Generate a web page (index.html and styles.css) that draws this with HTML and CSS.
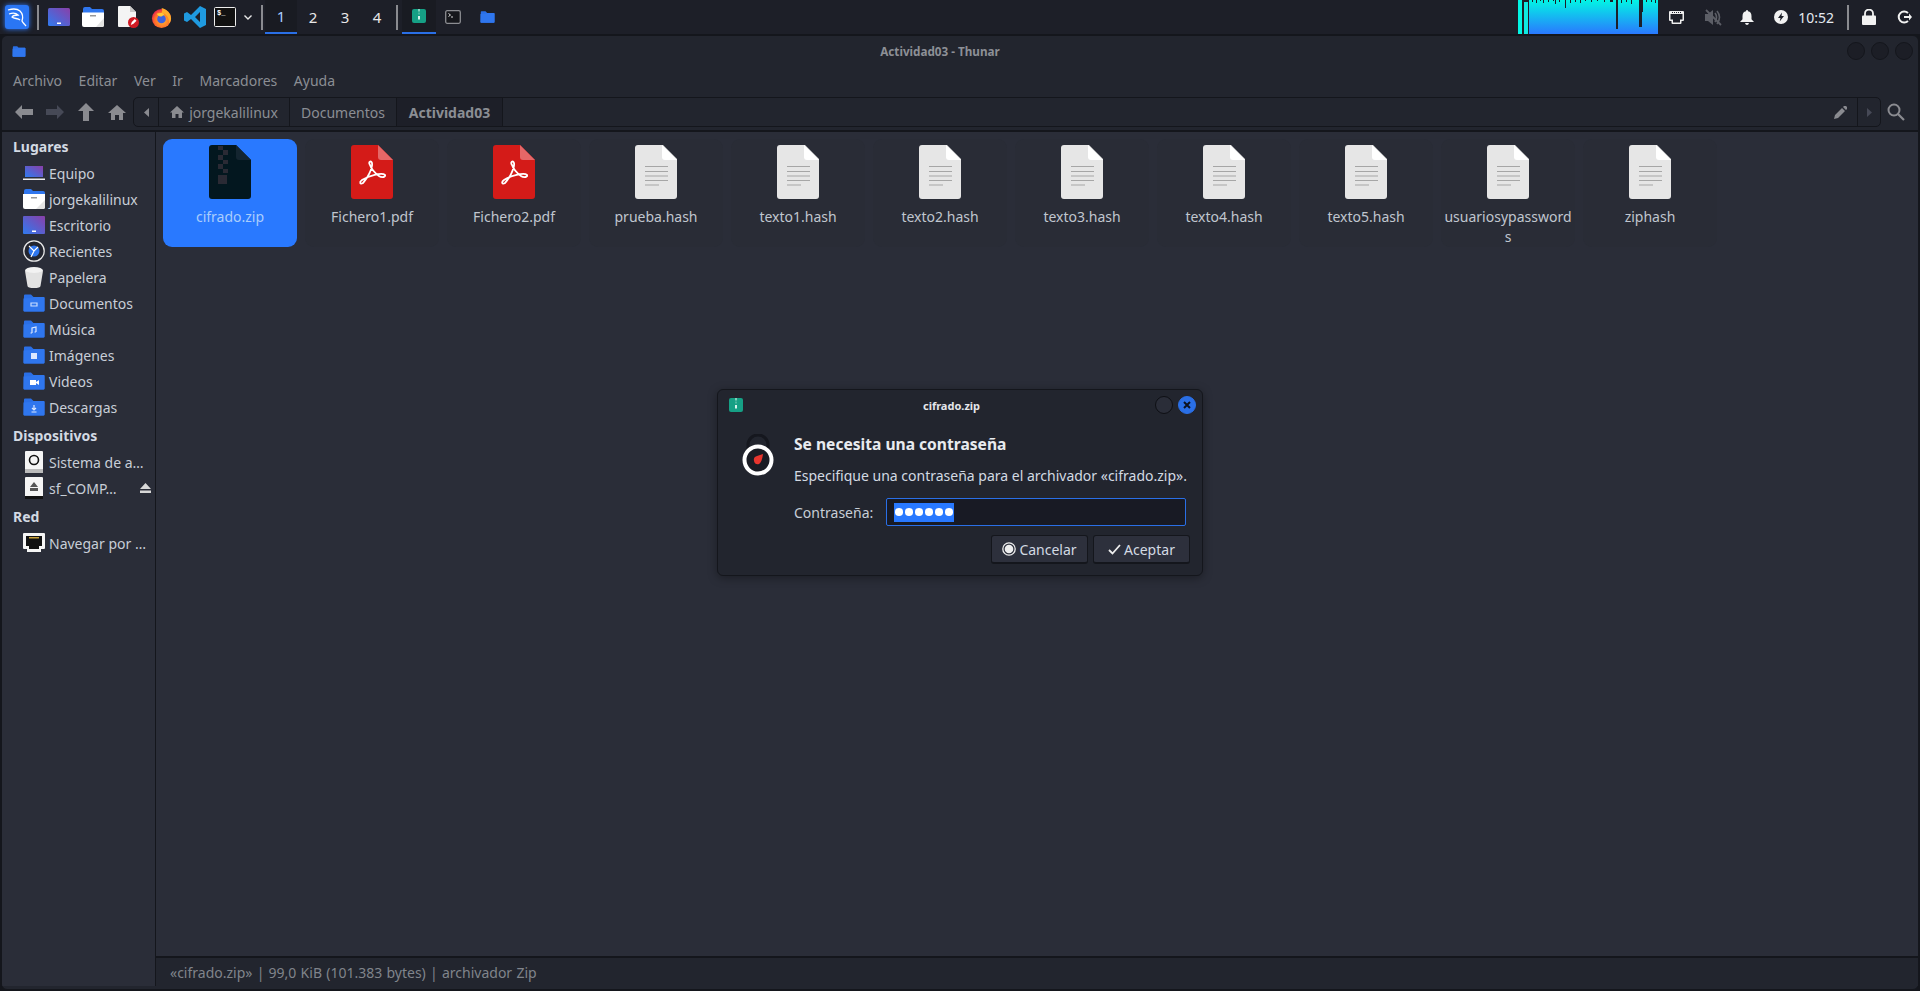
FILE: index.html
```html
<!DOCTYPE html>
<html lang="es">
<head>
<meta charset="utf-8">
<title>Actividad03 - Thunar</title>
<link rel="stylesheet" href="styles.css">
</head>
<body>
<svg class="defs" width="0" height="0" aria-hidden="true">
  <defs>
    <linearGradient id="desk" x1="0" y1="1" x2="1" y2="0"><stop offset="0" stop-color="#2f7bf0"/><stop offset="1" stop-color="#8a3fa8"/></linearGradient>
    <linearGradient id="graph" x1="0" y1="0" x2="0" y2="1"><stop offset="0" stop-color="#02f5e4"/><stop offset="1" stop-color="#2a78ff"/></linearGradient>
    <radialGradient id="ffox" cx=".55" cy=".6" r=".6"><stop offset="0" stop-color="#ffbd2e"/><stop offset=".7" stop-color="#ff6a2a"/><stop offset="1" stop-color="#e5254f"/></radialGradient>
    <symbol id="folder" viewBox="0 0 22 18">
      <path d="M1 1.500Q1 .5 2 .5h6l2.500 2.500H20.500q1 0 1 1v12.500q0 1-1 1h-19q-1 0-1-1z" fill="#2a6fe6"/>
      <path d="M.5 4.500 8 4l2.500-1H20.500q1 0 1 1v12.500q0 1-1 1h-19q-1 0-1-1z" fill="#2f76ee"/>
    </symbol>
    <symbol id="txt" viewBox="0 0 42 54">
      <path d="M3 0H28L42 14V51q0 3-3 3H3q-3 0-3-3V3q0-3 3-3z" fill="#e6e6e6"/>
      <path d="M27 0 42 15H30q-3 0-3-3z" fill="#fff"/>
      <path d="M10 21.500H33M10 26.500H33M10 31H33M10 35.500H33M10 40H24" stroke="#a6a6a6" stroke-width="1.200"/>
    </symbol>
    <symbol id="pdf" viewBox="0 0 42 54">
      <path d="M3 0H27L42 15V51q0 3-3 3H3q-3 0-3-3V3q0-3 3-3z" fill="#d41b18"/>
      <path d="M27 0 42 15H30q-3 0-3-3z" fill="#e56767"/>
      <path d="M19 20c-2-3 1-5 2-2 1 5-5 16-9 20-3 2-4-1-1-3 6-4 20-8 23-5 1 2-3 3-6 1-4-3-8-8-9-11z" fill="none" stroke="#fff" stroke-width="1.800"/>
    </symbol>
    <symbol id="zipdoc" viewBox="0 0 42 54">
      <path d="M3 0H27L42 15V51q0 3-3 3H3q-3 0-3-3V3q0-3 3-3z" fill="#03171f"/>
      <path d="M27 0 42 15H30q-3 0-3-3z" fill="#142530"/>
      <path d="M9 1h5v4H9zM14 5h5v5h-5zM9 10h5v5H9zM14 15h5v4h-5zM9 19h5v5H9zM14 24h5v4h-5zM9 30h9v9H9z" fill="#2a2a34"/>
    </symbol>
    <symbol id="archive" viewBox="0 0 14 14">
      <path d="M2 0h10q2 0 2 2v10q0 2-2 2H2q-2 0-2-2V2q0-2 2-2z" fill="#16a085"/>
      <path d="M6 0h2v2.500H6zM6.500 3.500h1v2h-1z" fill="#7fd0bc"/>
      <path d="M6 7h2v3.500H6z" fill="#d6f3ec"/>
    </symbol>
  </defs>
</svg>

<header class="panel">
  <div class="kali"><svg viewBox="0 0 24 24" width="24" height="24"><path d="M3 5c5-1.500 9-1.500 12 1 3 3 3 7 2 10 1 2 2.500 3 4 5M4 9c3-1 7-1 9 1-2 0-5 .5-6 2 2 2 6 1 8 3" fill="none" stroke="#fff" stroke-width="1.300"/></svg></div>
  <i class="sep sep-a"></i>
  <div class="launcher l-desk"><svg viewBox="0 0 22 18" width="22" height="18"><rect width="22" height="18" rx="1.500" fill="url(#desk)"/><path d="M9 14.500h4v1.500H9z" fill="#fff"/></svg></div>
  <div class="launcher l-files"><svg viewBox="0 0 22 20" width="22" height="20"><path d="M1 2q0-2 2-2h5l2 2h10q2 0 2 2v4H1z" fill="#2f76ee"/><path d="M0 5.500h22V18q0 2-2 2H2q-2 0-2-2z" fill="#fff"/><path d="M8 8h6v1.500H8z" fill="#999"/><path d="M14 20 22 11v7q0 2-2 2z" fill="#e4e4e4"/></svg></div>
  <div class="launcher l-note"><svg viewBox="0 0 22 22" width="22" height="22"><path d="M1 0h11l6 6v14q0 1-1 1H1q-1 0-1-1V1q0-1 1-1z" fill="#f4f4f4"/><path d="M12 0l6 6h-6z" fill="#c9c9c9"/><circle cx="15.500" cy="16.500" r="5.500" fill="#d01a24"/><path d="M12.800 19l1-3 3-3 1.700 1.700-3 3z" fill="#fff"/></svg></div>
  <div class="launcher l-fox"><svg viewBox="0 0 22 22" width="21" height="21"><circle cx="11" cy="12" r="10" fill="url(#ffox)"/><path d="M11 1c5 1 10 5 10 11 0 2-1 4-2 5 0-6-3-10-8-11 1-2 1-3 0-5z" fill="#ffae2b"/><circle cx="11" cy="12.500" r="4.500" fill="#3d63e0"/><path d="M6 7c3-1 7-1 8 1l-3 2c-2 0-4-1-5-3z" fill="#ffc93a"/></svg></div>
  <div class="launcher l-code"><svg viewBox="0 0 22 22" width="22" height="22"><path d="M16 0 22 3v16l-6 3-9-9-4 3-3-1.500v-7L3 6l4 3zM16 6l-5 5 5 5z" fill="#1f9ae0" fill-rule="evenodd"/></svg></div>
  <div class="launcher l-term"><svg viewBox="0 0 22 20" width="22" height="20"><rect x=".5" y=".5" width="21" height="19" rx="1" fill="#111" stroke="#eee"/><text x="3" y="8" class="term-text">$_</text></svg></div>
  <svg class="chev" viewBox="0 0 8 5" width="8" height="5"><path d="M.5.5 4 4 7.500.5" fill="none" stroke="#e8e8e8" stroke-width="1.400"/></svg>
  <i class="sep sep-b"></i>
  <nav class="workspaces">
    <span class="ws ws-on">1</span><span class="ws">2</span><span class="ws">3</span><span class="ws">4</span>
  </nav>
  <i class="sep sep-c"></i>
  <div class="task task-on"><svg width="14" height="14"><use href="#archive"/></svg></div>
  <div class="task"><svg viewBox="0 0 16 14" width="16" height="14"><rect x=".7" y=".7" width="14.600" height="12.600" rx="1.500" fill="#16171c" stroke="#8c8d92" stroke-width="1.300"/><path d="M3.500 3.500 5.500 5 3.500 6.500M6 7h2" stroke="#eee" fill="none" stroke-width=".9"/></svg></div>
  <div class="task"><svg width="15" height="12"><use href="#folder"/></svg></div>

  <div class="spacer"></div>

  <svg class="graph" viewBox="0 0 140 34" width="140" height="34">
    <rect x="0" width="4" height="34" fill="#02f5e4"/>
    <rect x="6" y="2" width="4" height="32" fill="#0fe9e0"/>
    <rect x="11" width="129" height="34" fill="url(#graph)"/>
    <g fill="#1d1f28">
      <rect x="14" width="1" height="2"/><rect x="18" width="1" height="3"/><rect x="22" width="1" height="1"/><rect x="25" width="1" height="3"/><rect x="30" width="1" height="2"/><rect x="35" width="1" height="1"/><rect x="37" width="1" height="4"/><rect x="41" width="1" height="2"/><rect x="47" width="1" height="8"/><rect x="52" width="1" height="3"/><rect x="57" width="1" height="2"/><rect x="62" width="1" height="3"/><rect x="67" width="1" height="1"/><rect x="73" width="1" height="2"/><rect x="79" width="1" height="1"/><rect x="86" width="1" height="2"/><rect x="92" width="3" height="2"/><rect x="98" width="2" height="29"/><rect x="103" width="1" height="3"/><rect x="108" width="1" height="2"/><rect x="113" width="1" height="4"/><rect x="121" width="3" height="27"/><rect x="124" width="1" height="12"/><rect x="128" width="1" height="2"/><rect x="133" width="1" height="2"/><rect x="137" width="1" height="3"/>
    </g>
  </svg>
  <svg class="tray t-net" viewBox="0 0 15 13" width="15" height="13"><path d="M1 0h13q1 0 1 1v8q0 1-1 1h-1.500v2q0 1-1 1h-8q-1 0-1-1v-2H1q-1 0-1-1V1q0-1 1-1z" fill="#eee"/><path d="M1.500 3H13.500V8.500H11V11.500H4V8.500H1.500z" fill="#1d1f28"/><path d="M3 1.500h9" stroke="#1d1f28" stroke-dasharray="1 1"/></svg>
  <svg class="tray t-mute" viewBox="0 0 18 17" width="18" height="17"><path d="M1 5h3l5-4v15l-5-4H1z" fill="#5c5e66"/><path d="M11 4q3 4 0 9M13 2q5 6 0 13" fill="none" stroke="#5c5e66" stroke-width="1.600"/><path d="M2 1l15 15" stroke="#5c5e66" stroke-width="1.800"/></svg>
  <svg class="tray t-bell" viewBox="0 0 14 15" width="14" height="15"><path d="M7 0q1 0 1 1.300 3.500.7 3.500 5v3L14 12H0l2.500-2.700v-3q0-4.300 3.500-5Q6 0 7 0zM5 13h4q-.5 2-2 2t-2-2z" fill="#f2f2f2"/></svg>
  <svg class="tray t-power" viewBox="0 0 14 14" width="14" height="14"><circle cx="7" cy="7" r="7" fill="#f2f2f2"/><path d="M8 2.500 4 8h2.500L5.700 11.500 10 6H7.500z" fill="#1d1f28"/></svg>
  <span class="clock">10:52</span>
  <i class="sep sep-d"></i>
  <svg class="tray t-lock" viewBox="0 0 14 16" width="14" height="16"><path d="M3 7V4.500a4 4 0 0 1 8 0V7" fill="none" stroke="#f2f2f2" stroke-width="1.800"/><rect y="6.500" width="14" height="9.500" rx="1" fill="#f2f2f2"/></svg>
  <svg class="tray t-out" viewBox="0 0 15 14" width="15" height="14"><path d="M11 3a5.500 5.500 0 1 0 0 8" fill="none" stroke="#f2f2f2" stroke-width="2"/><path d="M7 6h5V3.500L15 7l-3 3.500V8H7z" fill="#f2f2f2"/></svg>
</header>

<main class="window">
  <div class="titlebar">
    <svg class="title-icon" width="14" height="11"><use href="#folder"/></svg>
    <span class="title">Actividad03 - Thunar</span>
    <div class="wbtns"><i class="wbtn"></i><i class="wbtn"></i><i class="wbtn"></i></div>
  </div>

  <div class="menubar">
    <span>Archivo</span><span>Editar</span><span>Ver</span><span>Ir</span><span>Marcadores</span><span>Ayuda</span>
  </div>

  <div class="toolbar">
    <div class="nav">
      <svg viewBox="0 0 18 14" width="18" height="14"><path d="M7 0v4h11v6H7v4L0 7z" fill="#8a8b90"/></svg>
      <svg viewBox="0 0 18 14" width="18" height="14"><path d="M11 0v4H0v6h11v4l7-7z" fill="#464956"/></svg>
      <svg viewBox="0 0 16 18" width="16" height="18"><path d="M8 0l8 8h-5v10H5V8H0z" fill="#8a8b90"/></svg>
      <svg viewBox="0 0 18 15" width="18" height="15"><path d="M9 0l9 8h-3v7h-4v-5H7v5H3V8H0z" fill="#8a8b90"/></svg>
    </div>
    <div class="pathbar">
      <div class="seg seg-arrow"><svg viewBox="0 0 5 9" width="5" height="9"><path d="M5 0v9L0 4.500z" fill="#8a8b90"/></svg></div>
      <div class="seg seg-home"><svg viewBox="0 0 14 12" width="14" height="12"><path d="M7 0l7 6.500h-2V12H8.500V8h-3v4H2V6.500H0z" fill="#8a8b90"/></svg><span>jorgekalilinux</span></div>
      <div class="seg seg-doc">Documentos</div>
      <div class="seg seg-cur">Actividad03</div>
      <div class="pathfill"></div>
      <svg class="pencil" viewBox="0 0 13 13" width="13" height="13"><path d="M0 13l1-4 7-7 3 3-7 7zM9 1l1-1q1-.5 2 0l1 1q.5 1 0 2l-1 1z" fill="#8a8b90"/></svg>
      <div class="seg seg-next"><svg viewBox="0 0 5 9" width="5" height="9"><path d="M0 0v9l5-4.500z" fill="#464956"/></svg></div>
    </div>
    <svg class="search" viewBox="0 0 18 18" width="18" height="18"><circle cx="7" cy="7" r="5.500" fill="none" stroke="#8a8b90" stroke-width="2"/><path d="M11 11l6 6" stroke="#8a8b90" stroke-width="2.200"/></svg>
  </div>

  <div class="content">
    <aside class="sidebar">
      <h2>Lugares</h2>
      <div class="row"><span class="ri"><svg viewBox="0 0 22 14" width="22" height="14"><path d="M2 0h18v11H2z" fill="url(#desk)"/><path d="M0 12.500h22V14H0z" fill="#eee"/></svg></span>Equipo</div>
      <div class="row"><span class="ri"><svg viewBox="0 0 22 20" width="22" height="20"><path d="M1 2q0-2 2-2h5l2 2h10q2 0 2 2v4H1z" fill="#2f76ee"/><path d="M0 5h22v13q0 2-2 2H2q-2 0-2-2z" fill="#fff"/><path d="M8 8h6v1.500H8z" fill="#999"/><path d="M13 20 22 11v7q0 2-2 2z" fill="#e4e4e4"/></svg></span>jorgekalilinux</div>
      <div class="row"><span class="ri"><svg viewBox="0 0 22 18" width="22" height="18"><rect width="22" height="18" rx="1" fill="url(#desk)"/><path d="M9 14.500h4V16H9z" fill="#fff"/></svg></span>Escritorio</div>
      <div class="row"><span class="ri"><svg viewBox="0 0 22 22" width="22" height="22"><circle cx="11" cy="11" r="10.200" fill="#23252f" stroke="#e8e8e8" stroke-width="1.300"/><circle cx="11" cy="11" r="5.500" fill="#2f76ee"/><path d="M6 6l5 5 4-4M11 11l-3 6" fill="none" stroke="#fff" stroke-width="1.200"/></svg></span>Recientes</div>
      <div class="row"><span class="ri"><svg viewBox="0 0 18 21" width="18" height="21"><ellipse cx="9" cy="3.500" rx="9" ry="3.500" fill="#f2f2f2"/><path d="M0 4l2.500 15q.3 2 6.500 2t6.500-2L18 4q-9 4-18 0z" fill="#e2e2e2"/></svg></span>Papelera</div>
      <div class="row"><span class="ri"><svg width="22" height="18"><use href="#folder"/><path d="M8 9h6v3H8z" fill="none" stroke="#c8dcff" stroke-width="1.200"/></svg></span>Documentos</div>
      <div class="row"><span class="ri"><svg width="22" height="18"><use href="#folder"/><path d="M9 13V8l4-1v5M9 13H7.500M13 12h-1.500" fill="none" stroke="#dce8ff" stroke-width="1.200"/></svg></span>Música</div>
      <div class="row"><span class="ri"><svg width="22" height="18"><use href="#folder"/><path d="M8 7h6v6H8z" fill="#dce8ff"/></svg></span>Imágenes</div>
      <div class="row"><span class="ri"><svg width="22" height="18"><use href="#folder"/><path d="M7 8h6v5H7zM13 10l3-2v5l-3-2z" fill="#fff"/></svg></span>Videos</div>
      <div class="row"><span class="ri"><svg width="22" height="18"><use href="#folder"/><path d="M11 7v5M9 10l2 2 2-2M8.500 14h5" fill="none" stroke="#dce8ff" stroke-width="1.200"/></svg></span>Descargas</div>
      <h2 class="gap">Dispositivos</h2>
      <div class="row"><span class="ri"><svg viewBox="0 0 18 22" width="18" height="22"><path d="M0 1q0-1 1-1h16q1 0 1 1v20H0z" fill="#f5f5f5"/><circle cx="9" cy="9" r="4.500" fill="none" stroke="#111" stroke-width="1.600"/><path d="M0 18h18v4H0z" fill="#bbb"/></svg></span>Sistema de a…</div>
      <div class="row"><span class="ri"><svg viewBox="0 0 18 22" width="18" height="22"><path d="M0 1q0-1 1-1h16q1 0 1 1v18H0z" fill="#f5f5f5"/><path d="M9 5l4 5H5zM5 11h8v3H5z" fill="#555"/><path d="M0 19h18v3H0z" fill="#111"/></svg></span><span class="rt">sf_COMP…</span><svg viewBox="0 0 11 10" width="11" height="10"><path d="M5.500 0 11 6H0zM0 7.500h11V10H0z" fill="#d8d8d8"/></svg></div>
      <h2 class="gap">Red</h2>
      <div class="row"><span class="ri"><svg viewBox="0 0 22 20" width="22" height="20"><path d="M1 0h20q1 0 1 1v14q0 1-1 1h-3v3H4v-3H1q-1 0-1-1V1q0-1 1-1z" fill="#f5f5f5"/><path d="M3 3h16v10h-3v3H6v-3H3z" fill="#111"/><path d="M6 4h10v1.500H6z" fill="#c9a23a"/></svg></span>Navegar por …</div>
    </aside>

    <section class="main">
      <div class="grid">
        <figure class="cell cell-sel"><svg width="42" height="54"><use href="#zipdoc"/></svg><figcaption>cifrado.zip</figcaption></figure>
        <figure class="cell"><svg width="42" height="54"><use href="#pdf"/></svg><figcaption>Fichero1.pdf</figcaption></figure>
        <figure class="cell"><svg width="42" height="54"><use href="#pdf"/></svg><figcaption>Fichero2.pdf</figcaption></figure>
        <figure class="cell"><svg width="42" height="54"><use href="#txt"/></svg><figcaption>prueba.hash</figcaption></figure>
        <figure class="cell"><svg width="42" height="54"><use href="#txt"/></svg><figcaption>texto1.hash</figcaption></figure>
        <figure class="cell"><svg width="42" height="54"><use href="#txt"/></svg><figcaption>texto2.hash</figcaption></figure>
        <figure class="cell"><svg width="42" height="54"><use href="#txt"/></svg><figcaption>texto3.hash</figcaption></figure>
        <figure class="cell"><svg width="42" height="54"><use href="#txt"/></svg><figcaption>texto4.hash</figcaption></figure>
        <figure class="cell"><svg width="42" height="54"><use href="#txt"/></svg><figcaption>texto5.hash</figcaption></figure>
        <figure class="cell"><svg width="42" height="54"><use href="#txt"/></svg><figcaption>usuariosypasswords</figcaption></figure>
        <figure class="cell"><svg width="42" height="54"><use href="#txt"/></svg><figcaption>ziphash</figcaption></figure>
      </div>
      <footer class="status">«cifrado.zip» | 99,0 KiB (101.383 bytes) | archivador Zip</footer>
    </section>
  </div>
</main>

<div class="dialog" role="dialog">
  <div class="dlg-title">
    <svg width="14" height="14"><use href="#archive"/></svg>
    <span>cifrado.zip</span>
    <div class="dlg-btns">
      <i class="dbtn"></i>
      <i class="dbtn dbtn-close"><svg viewBox="0 0 8 8" width="8" height="8"><path d="M1 1l6 6M7 1 1 7" stroke="#0c1220" stroke-width="2"/></svg></i>
    </div>
  </div>
  <div class="dlg-body">
    <svg class="lock" viewBox="0 0 32 42" width="32" height="42"><path d="M6 15V11a10 10 0 0 1 20 0v4" fill="none" stroke="#15171e" stroke-width="3"/><circle cx="16" cy="26" r="13.500" fill="#1a1c24" stroke="#fff" stroke-width="4"/><path d="M21 20q-1 8-4 10-4 1-5-3t3-5q3-1 6-2z" fill="#e8352e"/></svg>
    <div class="dlg-main">
      <h1>Se necesita una contraseña</h1>
      <p>Especifique una contraseña para el archivador «cifrado.zip».</p>
      <div class="field">
        <label>Contraseña:</label>
        <div class="input"><span class="sel"><i></i><i></i><i></i><i></i><i></i><i></i></span></div>
      </div>
    </div>
  </div>
  <div class="dlg-actions">
    <button class="btn"><svg viewBox="0 0 14 14" width="14" height="14"><circle cx="7" cy="7" r="6.200" fill="none" stroke="#eee" stroke-width="1.300"/><circle cx="7" cy="7" r="4.300" fill="#eee"/></svg>Cancelar</button>
    <button class="btn"><svg viewBox="0 0 13 11" width="13" height="11"><path d="M1 6l3.500 3.500L12 1" fill="none" stroke="#eee" stroke-width="1.800"/></svg>Aceptar</button>
  </div>
</div>
</body>
</html>
```

FILE: styles.css
```css
* { box-sizing: border-box; }
html, body { height: 100%; }
body {
  margin: 0;
  height: 991px;
  overflow: hidden;
  display: flex;
  flex-direction: column;
  background: #14161c;
  color: #d3dae3;
  font-family: "Noto Sans", sans-serif;
  font-size: 14px;
}
.defs { position: absolute; }
svg { display: block; flex: none; }

/* panel */
.panel {
  height: 34px;
  flex: none;
  display: flex;
  align-items: center;
  background: #1d1f28;
}
.kali {
  width: 24px; height: 24px;
  margin-left: 5px;
  background: #2a76f5;
  border-radius: 3px;
  box-shadow: 0 0 5px #2f7bff;
}
.sep { display: block; width: 2px; height: 25px; background: #8a8b90; flex: none; }
.sep-a { margin-left: 8px; }
.launcher { display: flex; flex: none; }
.l-desk { margin-left: 9px; }
.l-files { margin-left: 12px; }
.l-note { margin-left: 14px; }
.l-fox { margin-left: 11px; }
.l-code { margin-left: 12px; }
.l-term { margin-left: 8px; }
.term-text { font: bold 7px "Liberation Mono", monospace; fill: #fff; }
.chev { margin-left: 8px; }
.sep-b { margin-left: 9px; }
.workspaces { display: flex; margin-left: 2px; height: 34px; }
.ws {
  width: 32px;
  display: flex;
  align-items: center;
  justify-content: center;
  color: #e8e8e8;
  font-size: 15px;
}
.ws-on { background: #191b22; color: #a9d0ff; border-bottom: 2px solid #2a6fe6; }
.sep-c { margin-left: 3px; }
.task {
  width: 34px; height: 34px;
  display: flex; align-items: center; justify-content: center;
  flex: none;
}
.task-on { margin-left: 4px; background: #191b22; border-bottom: 2px solid #2a6fe6; }
.spacer { flex: 1; }
.graph { margin-right: 11px; }
.tray { flex: none; }
.t-mute { margin-left: 20px; }
.t-bell { margin-left: 18px; }
.t-power { margin-left: 20px; }
.clock { margin-left: 10px; color: #e4e9f0; font-size: 14px; }
.sep-d { margin-left: 13px; }
.t-lock { margin-left: 13px; }
.t-out { margin-left: 21px; margin-right: 8px; }

/* window */
.window {
  flex: 1;
  margin: 1px;
  display: flex;
  flex-direction: column;
  background: #22252e;
  border: 1px solid #14161c;
  border-radius: 6px;
  overflow: hidden;
  min-height: 0;
}
.titlebar { height: 30px; flex: none; display: flex; align-items: center; padding: 0 5px 0 10px; }
.title { flex: 1; text-align: center; font-size: 11.7px; font-weight: 700; color: #8d9096; padding-left: 7px; }
.wbtns { display: flex; gap: 6px; }
.wbtn { display: block; width: 18px; height: 18px; border-radius: 50%; background: #1c1e26; border: 1px solid #14161c; }
.menubar { height: 28px; flex: none; display: flex; align-items: center; gap: 16.600px; padding-left: 11px; color: #8b8e94; }
.toolbar { height: 36px; flex: none; display: flex; align-items: center; }
.nav { display: flex; align-items: center; width: 131px; padding-left: 13px; }
.nav svg:nth-child(2) { margin-left: 13px; }
.nav svg:nth-child(3) { margin-left: 14px; }
.nav svg:nth-child(4) { margin-left: 14px; }
.pathbar {
  width: 1748px;
  height: 30px;
  display: flex;
  align-items: center;
  border: 1px solid #14161c;
  border-radius: 5px;
  overflow: hidden;
  color: #8b8e94;
}
.seg { height: 100%; display: flex; align-items: center; justify-content: center; border-right: 1px solid #14161c; flex: none; }
.seg-arrow { width: 25px; }
.seg-home { width: 131px; gap: 5px; }
.seg-doc { width: 107px; }
.seg-cur { width: 106px; background: #1d1f28; font-weight: 700; }
.pathfill { flex: 1; }
.pencil { margin-right: 10px; }
.seg-next { width: 23px; border-right: 0; border-left: 1px solid #14161c; }
.search { margin-left: 6px; }
.content { flex: 1; display: flex; min-height: 0; border-top: 2px solid #14161c; margin-bottom: 3px; }
.sidebar {
  width: 154px;
  flex: none;
  background: #2a2d38;
  border-right: 1px solid #14161c;
  padding-top: 1px;
  color: #c8ced7;
}
.sidebar h2 { margin: 0 0 1px; height: 26px; padding-left: 11px; display: flex; align-items: center; font-size: 14px; font-weight: 700; color: #d3dae3; }
.sidebar h2.gap { margin-top: 2px; height: 26px; }
.row { height: 26px; display: flex; align-items: center; padding-left: 21px; white-space: nowrap; }
.ri { width: 22px; margin-right: 4px; display: flex; justify-content: center; flex: none; }
.rt { width: 91px; }
.main { flex: 1; display: flex; flex-direction: column; background: #2a2d38; min-width: 0; }
.grid { flex: 1; display: flex; align-items: flex-start; gap: 8px; padding: 7px 0 0 7px; }
.cell {
  margin: 0;
  width: 134px;
  height: 108px;
  flex: none;
  display: flex;
  flex-direction: column;
  align-items: center;
  padding-top: 6px;
  background: #292c36;
  border-radius: 9px;
  color: #c0c6cf;
}
.cell figcaption { width: 128px; margin-top: 8px; text-align: center; line-height: 20px; overflow-wrap: anywhere; }
.cell-sel { background: #2979ff; color: #a9cdfc; }
.status {
  height: 30px;
  flex: none;
  background: #22252e;
  border-top: 2px solid #14161c;
  display: flex;
  align-items: center;
  padding-left: 14px;
  white-space: pre;
  word-spacing: .6px;
  color: #80848b;
}

/* dialog */
.dialog {
  position: absolute;
  left: 717px; top: 389px;
  width: 486px; height: 187px;
  background: #22252e;
  border: 1px solid #14161c;
  border-radius: 6px;
  box-shadow: 0 2px 10px rgba(0,0,0,.35);
  display: flex;
  flex-direction: column;
}
.dlg-title { height: 30px; flex: none; display: flex; align-items: center; padding: 0 6px 0 11px; }
.dlg-title span { flex: 1; text-align: center; font-size: 11px; font-weight: 700; color: #e4e6ea; padding-left: 5px; }
.dlg-btns { display: flex; gap: 5px; }
.dbtn { width: 18px; height: 18px; border-radius: 50%; background: #2a2d38; border: 1px solid #0e0f14; display: flex; align-items: center; justify-content: center; }
.dbtn-close { background: #2a6fe6; border-color: #2a6fe6; }
.dlg-body { flex: 1; display: flex; padding: 14px 0 0 24px; }
.dlg-main { margin-left: 20px; width: 393px; }
.dlg-main h1 { margin: 0; font-size: 15.600px; font-weight: 700; line-height: 20px; color: #e8ebef; }
.dlg-main p { margin: 12px 0 0; line-height: 20px; color: #d3dae3; white-space: nowrap; }
.field { display: flex; align-items: center; margin-top: 12px; }
.field label { width: 92px; flex: none; color: #c8ced7; }
.input { width: 300px; height: 28px; background: #181a24; border: 1px solid #2a6fe6; border-radius: 2px; display: flex; align-items: center; padding-left: 7px; }
.sel { background: #2979ff; height: 19px; width: 60px; display: flex; align-items: center; gap: 2.500px; padding-left: 1px; }
.sel i { display: block; width: 7.500px; height: 7.500px; border-radius: 50%; background: #fff; }
.dlg-actions { display: flex; justify-content: flex-end; gap: 5px; padding: 0 12px 11px 0; flex: none; }
.btn {
  width: 97px; height: 29px;
  display: flex; align-items: center; justify-content: center; gap: 3px;
  background: #2d303c;
  border: 1px solid #14161c;
  border-bottom-width: 2px;
  border-radius: 3px;
  color: #d3dae3;
  font: 14px "Noto Sans", sans-serif;
  padding: 0;
}
```
